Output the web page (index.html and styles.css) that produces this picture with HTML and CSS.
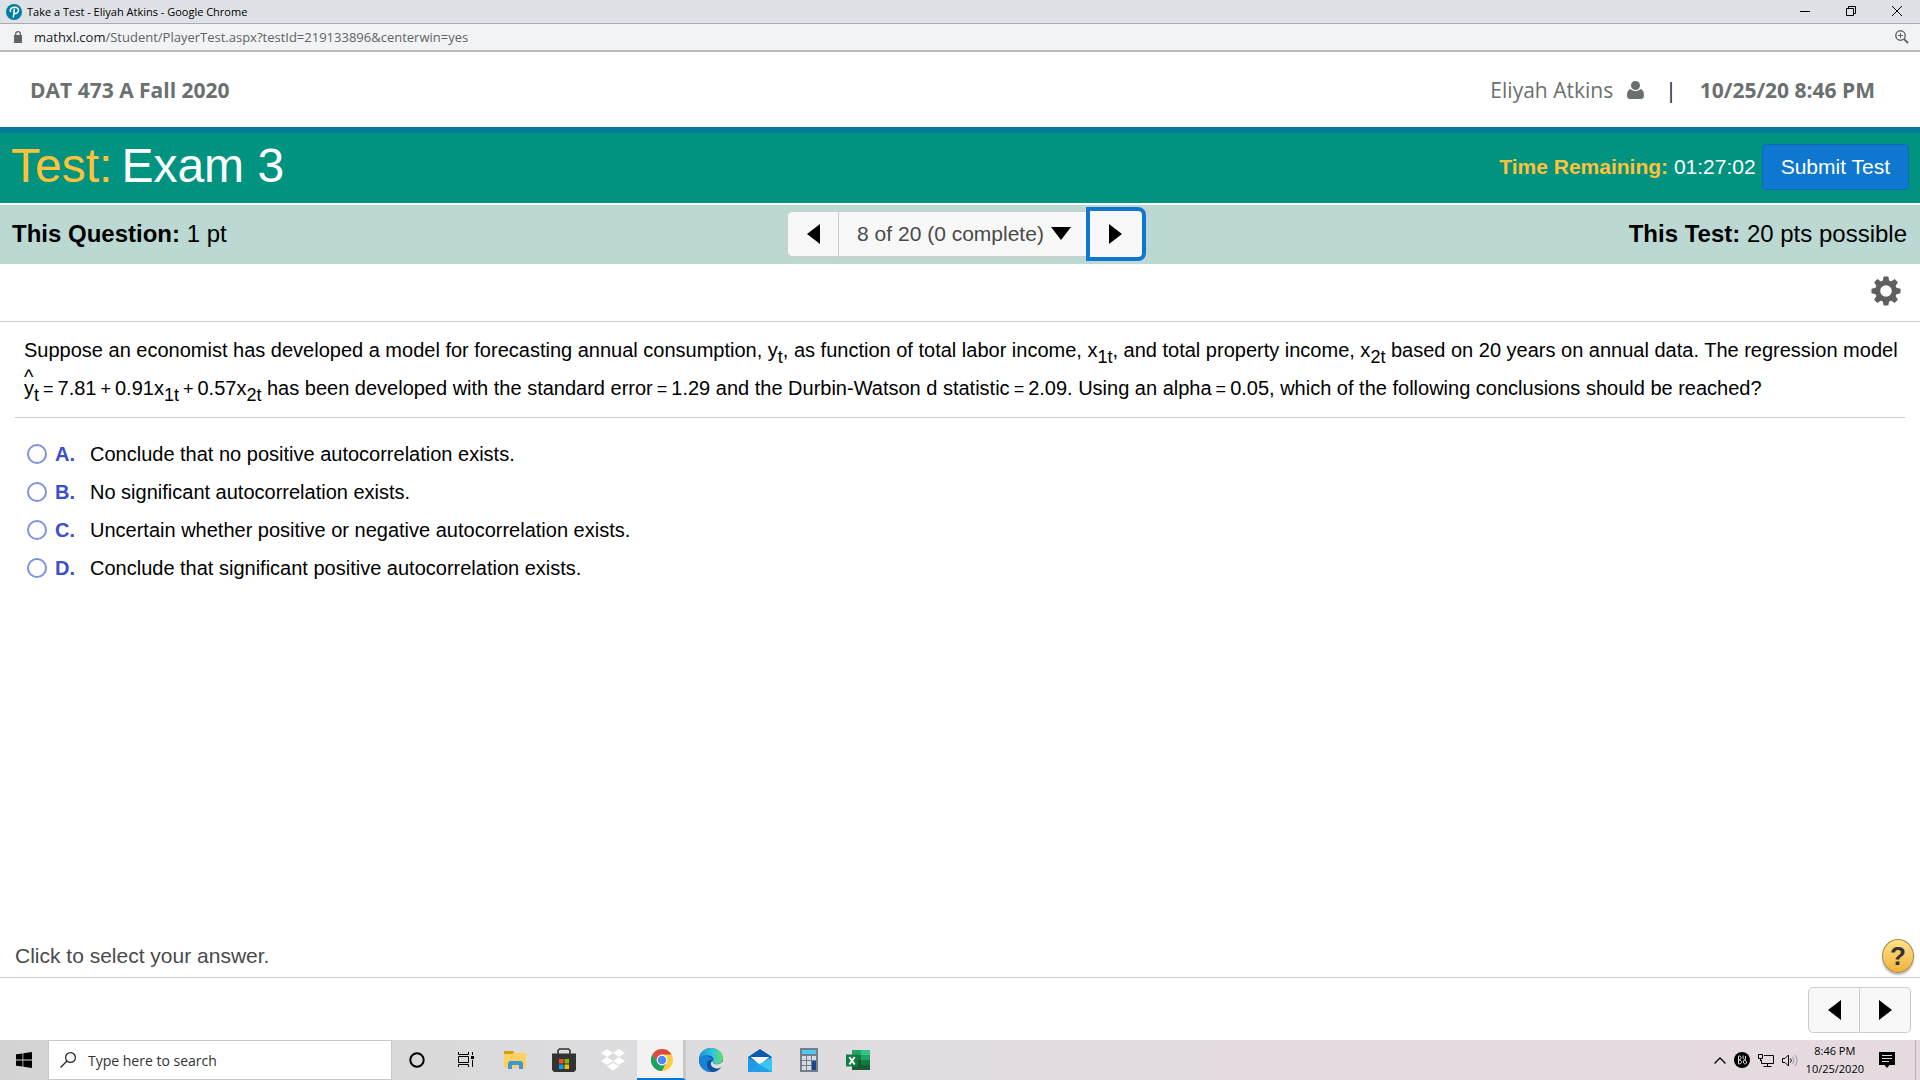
FILE: index.html
```html
<!DOCTYPE html>
<html lang="en">
<head>
    <meta charset="UTF-8">
    <title>Take a Test - Eliyah Atkins</title>
    <link rel="stylesheet" href="styles.css">
</head>
<body>
<div class="titlebar">
    <svg class="favicon" viewBox="0 0 16 16" width="16" height="16">
        <circle cx="8" cy="8" r="8" fill="#007fa3"/>
        <path d="M4.400 7.400C3.800 5 6 3.200 8.400 3.200c2.500 0 4 1.300 4 3.100 0 2-1.700 3.400-4.600 3.400M8.300 5.200 7.400 13" fill="none" stroke="#fff" stroke-width="1.500" stroke-linecap="round"/>
    </svg>
    <span class="window-title">Take a Test - Eliyah Atkins - Google Chrome</span>
    <div class="window-buttons">
        <button type="button" aria-label="Minimize"><svg width="10" height="10" viewBox="0 0 10 10"><path d="M0 5.500h10" stroke="#000"/></svg></button>
        <button type="button" aria-label="Restore"><svg width="10" height="10" viewBox="0 0 10 10" fill="none" stroke="#000"><path d="M.5 2.500h7v7h-7zM2.500 2.500v-2h7v7h-2"/></svg></button>
        <button type="button" aria-label="Close"><svg width="10" height="10" viewBox="0 0 10 10"><path d="M0 0l10 10M10 0L0 10" stroke="#000"/></svg></button>
    </div>
</div>
<div class="addressbar">
    <svg width="8" height="12" viewBox="0 0 8 12"><path d="M0 4h8v8H0z" fill="#5f6368"/><path d="M1.700 4.500V3a2.300 2.300 0 0 1 4.600 0v1.500" fill="none" stroke="#5f6368" stroke-width="1.300"/></svg>
    <span class="url"><b>mathxl.com</b>/Student/PlayerTest.aspx?testId=219133896&amp;centerwin=yes</span>
    <svg class="zoom-icon" width="14" height="14" viewBox="0 0 14 14" fill="none" stroke="#5f6368"><circle cx="5.500" cy="5.500" r="4.700" stroke-width="1.400"/><path d="M9 9l4 4" stroke-width="1.800"/><path d="M3 5.500h5M5.500 3v5"/></svg>
</div>

<header class="course">
    <span class="course-name">DAT 473 A Fall 2020</span>
    <span class="user">Eliyah Atkins</span>
    <svg class="user-icon" width="17" height="18" viewBox="0 0 17 18" fill="#6a7070"><circle cx="8.500" cy="4.500" r="4.500"/><path d="M3.500 8C1 8.500 0 11 0 14.500 0 17 1.300 18 3.300 18h10.400c2 0 3.300-1 3.300-3.500C17 11 16 8.500 13.500 8c-3 2.800-7 2.800-10 0z"/></svg>
    <span class="bar">|</span>
    <span class="date">10/25/20 8:46 PM</span>
</header>

<div class="test-bar">
    <h1><span>Test:</span> Exam 3</h1>
    <p class="time"><b>Time Remaining:</b> 01:27:02</p>
    <button type="button" class="submit">Submit Test</button>
</div>

<div class="question-bar">
    <p><b>This Question:</b> 1 pt</p>
    <nav class="pager">
        <button type="button" class="page-prev" aria-label="Previous question"><svg width="13" height="20" viewBox="0 0 13 20"><path d="M13 0v20L0 10z"/></svg></button>
        <button type="button" class="page-list">8 of 20 (0 complete)<svg width="20" height="13" viewBox="0 0 20 13"><path d="M0 0h20L10 13z"/></svg></button>
        <button type="button" class="page-next" aria-label="Next question"><svg width="13" height="20" viewBox="0 0 13 20"><path d="M0 0v20l13-10z"/></svg></button>
    </nav>
    <p class="points"><b>This Test:</b> 20 pts possible</p>
</div>

<div class="tools">
    <button type="button" aria-label="Settings">
        <svg width="30" height="30" viewBox="-15 -15 30 30">
            <circle r="8.300" fill="none" stroke="#5f5f5f" stroke-width="5"/>
            <g fill="#5f5f5f">
                <path id="tooth" d="M-3.400-9.500-2.300-14.500h4.600L3.400-9.500z"/>
                <use href="#tooth" transform="rotate(45)"/><use href="#tooth" transform="rotate(90)"/>
                <use href="#tooth" transform="rotate(135)"/><use href="#tooth" transform="rotate(180)"/>
                <use href="#tooth" transform="rotate(225)"/><use href="#tooth" transform="rotate(270)"/>
                <use href="#tooth" transform="rotate(315)"/>
            </g>
        </svg>
    </button>
</div>

<main class="question">
    <div class="stem">
        <p>Suppose an economist has developed a model for forecasting annual consumption, y<sub>t</sub>, as function of total labor income, x<sub>1t</sub>, and total property income, x<sub>2t</sub> based on 20 years on annual data. The regression model <br><span class="hat">y</span><sub>t</sub><span class="math">=</span>7.81<span class="math">+</span>0.91x<sub>1t</sub><span class="math">+</span>0.57x<sub>2t</sub> has been developed with the standard error<span class="math">=</span>1.29 and the Durbin-Watson d statistic<span class="math">=</span>2.09. Using an alpha<span class="math">=</span>0.05, which of the following conclusions should be reached?</p>
    </div>
    <form class="answers">
        <label><input type="radio" name="answer" value="A"><b>A.</b><span>Conclude that no positive autocorrelation exists.</span></label>
        <label><input type="radio" name="answer" value="B"><b>B.</b><span>No significant autocorrelation exists.</span></label>
        <label><input type="radio" name="answer" value="C"><b>C.</b><span>Uncertain whether positive or negative autocorrelation exists.</span></label>
        <label><input type="radio" name="answer" value="D"><b>D.</b><span>Conclude that significant positive autocorrelation exists.</span></label>
    </form>
</main>

<div class="hint">
    <p>Click to select your answer.</p>
    <button type="button" class="help">?</button>
</div>
<div class="bottom-nav">
    <button type="button" class="page-prev" aria-label="Previous"><svg width="13" height="20" viewBox="0 0 13 20"><path d="M13 0v20L0 10z"/></svg></button>
    <button type="button" class="page-next" aria-label="Next"><svg width="13" height="20" viewBox="0 0 13 20"><path d="M0 0v20l13-10z"/></svg></button>
</div>

<footer class="taskbar">
    <button type="button" class="start" aria-label="Start"><svg width="16" height="16" viewBox="0 0 16 16"><path d="M0 2.300 6.500 1.400v6.200H0zM7.300 1.300 16 0v7.600H7.300zM0 8.400h6.500v6.200L0 13.700zM7.300 8.400H16V16l-8.700-1.300z"/></svg></button>
    <div class="search">
        <svg width="16" height="16" viewBox="0 0 16 16" fill="none" stroke="#222" stroke-width="1.200"><circle cx="10.500" cy="5.500" r="4.900"/><path d="M7 9l-6.500 6.500"/></svg>
        <input type="text" aria-label="Search" placeholder="Type here to search">
    </div>
    <div class="apps">
        <button type="button" aria-label="Cortana"><svg width="16" height="16" viewBox="0 0 16 16"><circle cx="8" cy="8" r="6.700" fill="none" stroke="#000" stroke-width="2"/></svg></button>
        <button type="button" aria-label="Task View"><svg width="16" height="16" viewBox="0 0 16 16" fill="none" stroke="#000"><path d="M.5 0v2.500h10V0M.5 15v-2.500h10V15M.5 4.500h10v6H.5zM14.500 0v3M14.500 8v7"/><path d="M13 4h3v3h-3z" fill="#000" stroke="none"/></svg></button>
        <button type="button" aria-label="File Explorer"><svg width="22" height="18" viewBox="0 0 22 18"><path d="M0 0h9l1.500 2H22v15H0z" fill="#ffd260"/><path d="M0 0h9l1 1.500L8.500 3H0z" fill="#dc9a10"/><path d="M4 18v-6l1.500-2h12l1.500 2v6h-4v-4H8v4z" fill="#3b97dc"/></svg></button>
        <button type="button" aria-label="Store"><svg width="24" height="24" viewBox="0 0 24 24"><path d="M6 7V2.500L7.500 1h9L18 2.500V7" fill="none" stroke="#333" stroke-width="1.600"/><path d="M0 5.500h24V22l-2 2H2l-2-2z" fill="#333"/><path d="M7 11h4.500v4.500H7z" fill="#f25022"/><path d="M12.500 11H17v4.500h-4.500z" fill="#7fba00"/><path d="M7 16.500h4.500V21H7z" fill="#00a4ef"/><path d="M12.500 16.500H17V21h-4.500z" fill="#ffb900"/></svg></button>
        <button type="button" aria-label="Dropbox"><svg width="24" height="22" viewBox="0 0 24 22" fill="#fff"><path d="M6 0l6 4-6 4-6-4zM18 0l6 4-6 4-6-4zM6 8l6 4-6 4-6-4zM18 8l6 4-6 4-6-4zM12 13.500l6 4-6 4-6-4z"/></svg></button>
        <button type="button" class="open" aria-label="Chrome"><svg width="22" height="22" viewBox="-11 -11 22 22"><circle r="11" fill="#ffcd42"/><path d="M-9.530-5.500A11 11 0 0 1 9.530-5.500H0L-4.330 2.500z" fill="#db4a3f"/><path d="M-9.530-5.500A11 11 0 0 0 0 11L4.330 2.500H-4.330z" fill="#1ea261"/><circle r="5.400" fill="#fff"/><circle r="4.300" fill="#4c8bf5"/></svg></button>
        <button type="button" aria-label="Edge"><svg width="24" height="24" viewBox="0 0 24 24">
            <defs>
                <linearGradient id="edge-top"><stop offset="0" stop-color="#1b8fdc"/><stop offset=".55" stop-color="#30c6de"/><stop offset="1" stop-color="#64dd62"/></linearGradient>
            </defs>
            <circle cx="12" cy="12" r="12" fill="#0f4f9e"/>
            <path d="M0 12C0 4 6 0 12 0c7 0 12 4.500 12 10 0 4-3 6-6 6-3.500 0-5-1.500-4-3 1.500-3-1-5.500-5-5.500S1 9 0 12z" fill="url(#edge-top)"/>
            <path d="M0 12C1 8 4.500 7.500 8 8c4 .5 6 3 6 4.500-2-1.500-5.500-.5-6 3-.5 4 2.500 7.500 6 8.300C6 25 0 19 0 12z" fill="#1683d8"/>
            <path d="M14 12.500c-1.500 1.500.5 4 4.500 3.800 2.500-.1 4-1.300 5.500-3.300v5c-2 2-5 3-7.500 2.300C12 19.500 10 14.500 14 12.500z" fill="#dedde0"/>
            <path d="M9 12.500c-1.500 4 1 9 6 9.300 3.500.2 6-1.300 7.500-3.300-2 4-6 5.500-9.500 5.300C9 22 6.500 17 9 12.500z" fill="#134f9c"/>
        </svg></button>
        <button type="button" aria-label="Mail"><svg width="24" height="23" viewBox="0 0 24 23"><path d="M0 8l12-8 12 8v5H0z" fill="#0b5cab"/><path d="M2.500 8h19L12 16z" fill="#f5f5f5"/><path d="M0 8l24 15H0z" fill="#1f9be6"/><path d="M24 8v15L10.500 15.500z" fill="#38c5f2"/><path d="M10.500 15.500 24 23H0z" fill="#259fe8"/></svg></button>
        <button type="button" aria-label="Calculator"><svg width="18" height="24" viewBox="0 0 18 24"><path d="M0 0h18v24H0z" fill="#747d88"/><path d="M2 2h14v4H2z" fill="#48cbf5"/><path d="M2 8h4v4H2zM7 8h4v4H7zM12 8h4v4h-4zM2 13h4v4H2zM7 13h4v4H7zM2 18h4v4H2zM7 18h4v4H7z" fill="#d3dce4"/><path d="M12 13h4v9h-4z" fill="#154a8d"/></svg></button>
        <button type="button" aria-label="Excel"><svg width="24" height="22" viewBox="0 0 24 22"><path d="M6 1h9v5H6z" fill="#21a366"/><path d="M15 1h9v5h-9z" fill="#33c481"/><path d="M6 6h9v5H6z" fill="#107c41"/><path d="M15 6h9v5h-9z" fill="#21a366"/><path d="M6 11h9v5H6z" fill="#185c37"/><path d="M15 11h9v5h-9z" fill="#107c41"/><path d="M6 16h18v5H6z" fill="#185c37"/><path d="M0 5.500h12v12H0z" fill="#107c41"/><path d="M3.300 8l5.400 7.500M8.700 8l-5.400 7.500" stroke="#fff" stroke-width="1.900"/></svg></button>
    </div>
    <div class="tray">
        <svg width="12" height="7" viewBox="0 0 12 7"><path d="M.5 6.500 6 1l5.500 5.500" fill="none" stroke="#000" stroke-width="1.300"/></svg>
        <svg width="16" height="16" viewBox="0 0 16 16"><circle cx="8" cy="8" r="8"/><path d="M4.500 4v8M4.500 4c3.500-.5 3.500 3.500 0 4 4 0 4 4 0 4M9 3.500c0 3 .5 4 3 4.500M9.500 8.500c-1 3 2 4.500 3 2.500.5-2-1.500-3-3-2.500zM11.500 4v3" fill="none" stroke="#ddd"/></svg>
        <svg width="16" height="13" viewBox="0 0 16 13" fill="none" stroke="#000"><path d="M6 1.500h9.500v8H3.500V6M9.500 9.500v3M5.500 12.500h8M.5.500h4v4h-4zM2.500 4.500V7"/></svg>
        <svg width="16" height="13" viewBox="0 0 16 13" fill="none"><path d="M.5 4.500H3l3.500-3.500v11L3 8.500H.5z" stroke="#000"/><path d="M8.500 4.500q1.500 2 0 4" stroke="#000"/><path d="M10.500 2.800q2.800 3.700 0 7.400M13 1q4 5.500 0 11" stroke="#999"/></svg>
        <div class="clock">8:46 PM<br>10/25/2020</div>
        <svg class="notes" width="16" height="16" viewBox="0 0 16 16"><path d="M0 0h16v13h-5.500L8 16l-2.500-3H0z"/><path d="M3 3.500h10M3 6.500h10M3 9.500h7" stroke="#e5dae0"/></svg>
    </div>
</footer>
</body>
</html>
```
FILE: styles.css
```css
*{
    box-sizing: border-box;
    margin: 0;
    padding: 0;
}
body{
    min-height: 100vh;
    display: flex;
    flex-direction: column;
    background: #fff;
    color: #000;
    font-family: "Liberation Sans", Arial, sans-serif;
    font-size: 21px;
}
button, input{
    font: inherit;
    color: inherit;
    border: 0;
    background: none;
}
button{
    cursor: pointer;
}
svg{
    display: block;
    flex-shrink: 0;
}

/* browser window */
.titlebar{
    height: 24px;
    display: flex;
    align-items: center;
    background: #dee1e6;
    border-bottom: 1px solid #a9abae;
    padding-left: 6px;
    font-family: "Open Sans", sans-serif;
    font-size: 11px;
}
.window-title{
    margin-left: 5px;
}
.window-buttons{
    margin-left: auto;
    display: flex;
    padding-bottom: 2px;
}
.window-buttons button{
    width: 46px;
    height: 20px;
    display: flex;
    align-items: center;
    justify-content: center;
}
.addressbar{
    height: 28px;
    display: flex;
    align-items: center;
    background: #f1f3f4;
    border-bottom: 2px solid #b9bbbd;
    padding: 0 11px 0 14px;
    font-family: "Open Sans", sans-serif;
    font-size: 13px;
    color: #5f6368;
}
.url{
    margin-left: 12px;
}
.url b{
    font-weight: normal;
    color: #202124;
}
.zoom-icon{
    margin-left: auto;
}

/* course header */
.course{
    height: 75px;
    display: flex;
    align-items: center;
    padding: 0 45px 0 30px;
    font-family: "Open Sans", sans-serif;
    font-size: 21px;
    color: #6a7070;
}
.course-name, .date{
    font-weight: bold;
}
.user{
    margin-left: auto;
}
.user-icon{
    margin-left: 14px;
}
.bar{
    margin: 0 23px 0 21px;
    color: #222;
}

/* test title */
.test-bar{
    height: 76px;
    display: flex;
    align-items: center;
    background: #009380;
    border-top: 6px solid #047a9c;
    padding: 0 11px 2px;
    color: #fff;
}
.test-bar h1{
    display: flex;
    gap: 9px;
    padding-bottom: 3px;
    font-size: 48px;
    font-weight: normal;
}
.test-bar h1 span, .time b{
    color: #ffc23a;
}
.time{
    margin-left: auto;
}
.submit{
    height: 46px;
    margin-left: 6px;
    padding: 0 18px;
    background: #0f77cf;
    border: 1px solid #0e6ab8;
    border-radius: 4px;
}

.question-bar{
    height: 59px;
    margin-top: 2px;
    display: grid;
    grid-template-columns: 1fr auto 1fr;
    align-items: center;
    background: #bbd8d3;
    padding: 0 13px 2px 12px;
    font-size: 24px;
}
.points{
    text-align: right;
}
.pager{
    display: flex;
    align-items: center;
    margin-left: 14px;
    font-size: 21px;
    color: #4a4a4a;
}
.pager button, .bottom-nav button{
    height: 46px;
    display: flex;
    align-items: center;
    justify-content: center;
    background: #f8f8f8;
    border: 1px solid #ccc;
}
.page-prev, .page-next{
    width: 52px;
}
.page-prev{
    border-radius: 5px 0 0 5px;
}
.page-next{
    border-radius: 0 5px 5px 0;
}
.pager .page-list{
    border-width: 1px 0;
    padding: 0 15px 0 18px;
    gap: 7px;
}
.pager .page-next{
    width: 60px;
    height: 54px;
    border: 4px solid #0f77cf;
    border-radius: 0 8px 8px 0;
}

.tools{
    height: 58px;
    display: flex;
    align-items: center;
    justify-content: flex-end;
    border-bottom: 1px solid #ccced8;
    padding: 0 19px 3px;
}

/* question text and answers */
.question{
    flex: 1;
    padding: 0 15px;
    font-size: 20px;
}
.stem{
    border-bottom: 1px solid #ccced8;
    padding: 9px 0 9px 9px;
    line-height: 38px;
}
.stem sub{
    font-size: 18px;
    line-height: 0;
    vertical-align: -6px;
}
.math{
    margin: 0 4px;
    font-size: 18px;
}
.hat{
    position: relative;
}
.hat::before{
    content: "^";
    position: absolute;
    left: 0;
    top: -10px;
    line-height: 20px;
}
.answers{
    padding: 17px 12px;
}
.answers label{
    height: 38px;
    display: flex;
    align-items: center;
}
.answers input{
    appearance: none;
    width: 20px;
    height: 20px;
    border: 2px solid #7f92e0;
    border-radius: 50%;
    background: #fff;
}
.answers b{
    width: 35px;
    margin-left: 8px;
    color: #3a50c8;
}

.hint{
    height: 44px;
    display: flex;
    align-items: center;
    justify-content: space-between;
    border-bottom: 1px solid #ccced8;
    padding: 0 6px 0 15px;
    color: #4a4a4a;
}
.help{
    width: 32px;
    height: 34px;
    border: 1px solid #a8894a;
    border-radius: 50%;
    background: linear-gradient(#ffe38a, #f0b23c);
    box-shadow: 0 2px 2px #bbb;
    color: #333;
    font-size: 26px;
    font-weight: bold;
    line-height: 30px;
}
.bottom-nav{
    height: 62px;
    display: flex;
    justify-content: flex-end;
    align-items: center;
    padding: 2px 9px 0;
}
.bottom-nav .page-next{
    width: 51px;
    border-left: 0;
}

/* taskbar */
.taskbar{
    height: 40px;
    display: flex;
    background: linear-gradient(to right, #d3d3d3, #dcdcde 30%, #e2dbe0 60%, #e5dae0);
    font-family: "Open Sans", sans-serif;
}
.start{
    width: 48px;
    display: flex;
    align-items: center;
    justify-content: center;
}
.search{
    width: 344px;
    display: flex;
    align-items: center;
    background: #fff;
    border: 1px solid #c8c8c8;
    padding-left: 11px;
}
.search input{
    flex: 1;
    min-width: 0;
    margin-left: 12px;
    outline: none;
    font-size: 14px;
}
.search input::placeholder{
    color: #333;
    opacity: 1;
}
.apps{
    display: flex;
}
.apps button{
    width: 49px;
    display: flex;
    align-items: center;
    justify-content: center;
}
.apps .open{
    background: #f2f2f2;
    border-bottom: 2px solid #0078d7;
    border-right: 3px solid #c9c9cb;
    padding: 2px 0 0 3px;
}
.tray{
    display: flex;
    align-items: center;
    gap: 8px;
    margin-left: auto;
    margin-right: 4px;
    padding-right: 20px;
    border-right: 1px solid #b9b0b5;
}
.clock{
    font-size: 11px;
    line-height: 18px;
    text-align: center;
}
.notes{
    margin-left: 7px;
}
```
